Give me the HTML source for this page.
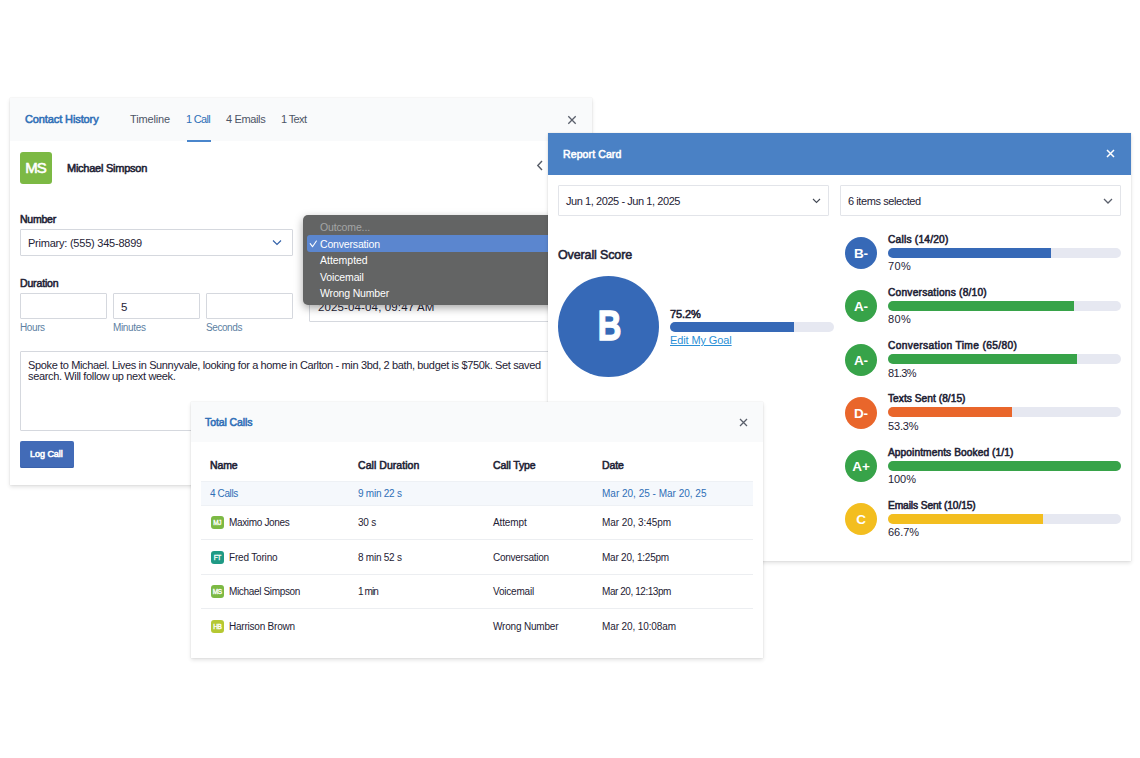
<!DOCTYPE html>
<html><head><meta charset="utf-8">
<style>
*{box-sizing:border-box;margin:0;padding:0}
html,body{width:1140px;height:758px;background:#fff;overflow:hidden}
body{position:relative;font-family:"Liberation Sans",sans-serif;color:#1e2235;font-size:11px}
.abs{position:absolute}
.t{position:absolute;white-space:nowrap;line-height:14px;height:14px}
.b{font-weight:normal;-webkit-text-stroke:.55px}
.card{position:absolute;background:#fff;box-shadow:0 2px 4px rgba(0,0,0,.12),0 0 1px rgba(0,0,0,.14)}
.hd{position:absolute;left:0;top:0;right:0;background:#f9fafb}
.inp{position:absolute;border:1px solid #d5d8de;background:#fff;border-radius:1px}
.blue{color:#2f6fb7}
.bar{position:absolute;height:10px;border-radius:5px;background:#e6e8f1;overflow:hidden}
.bar i{position:absolute;left:0;top:0;bottom:0;display:block}
.circ{position:absolute;border-radius:50%;color:#fff;font-weight:bold;text-align:center}
.row{position:absolute;left:10px;right:10px;border-bottom:1px solid #e9ebee}
.av{position:absolute;width:13px;height:13px;border-radius:3px;color:#fff;font-size:6.5px;-webkit-text-stroke:.3px;line-height:13.5px;letter-spacing:-.4px;text-indent:-.4px;text-align:center}
</style></head><body>

<!-- Card 1: Contact History -->
<div class="card" id="c1" style="left:10px;top:98px;width:582px;height:387px">
  <div class="hd" style="height:43px"></div>
  <div class="t b blue" style="left:15px;top:14px;font-size:11px;letter-spacing:-0.11px">Contact History</div>
  <div class="t" style="left:120px;top:14px;color:#4d5566;letter-spacing:-0.15px">Timeline</div>
  <div class="t blue" style="left:176px;top:14px;letter-spacing:-0.69px">1 Call</div>
  <div class="t" style="left:216px;top:14px;color:#4d5566;letter-spacing:-0.36px">4 Emails</div>
  <div class="t" style="left:271px;top:14px;color:#4d5566;letter-spacing:-0.64px">1 Text</div>
  <div class="abs" style="left:177px;top:42px;width:24px;height:2px;background:#4a86cc"></div>
  <svg class="abs" style="left:557px;top:16.5px" width="10" height="10" viewBox="0 0 10 10"><path d="M1.3 1.3L8.7 8.7M8.7 1.3L1.3 8.7" stroke="#5a5f6b" stroke-width="1.3" fill="none"/></svg>
  <div class="abs" style="left:10px;top:54px;width:32px;height:32px;border-radius:3px;background:#7cb944;color:#fff;-webkit-text-stroke:.6px;font-size:15px;line-height:32px;text-align:center;letter-spacing:-1.1px;text-indent:-1px">MS</div>
  <div class="t b" style="left:57px;top:63px;letter-spacing:-0.25px">Michael Simpson</div>
  <svg class="abs" style="left:526px;top:62px" width="8" height="11" viewBox="0 0 8 11"><path d="M6 1L1.8 5.5L6 10" stroke="#555b66" stroke-width="1.4" fill="none"/></svg>
  <div class="t b" style="left:10px;top:114px;font-size:10.5px;letter-spacing:-0.23px">Number</div>
  <div class="inp" style="left:10px;top:131px;width:273px;height:27px"></div>
  <div class="t" style="left:18px;top:138px;letter-spacing:-0.23px">Primary: (555) 345-8899</div>
  <svg class="abs" style="left:262px;top:141px" width="10" height="7" viewBox="0 0 10 7"><path d="M1 1.5L5 5.5L9 1.5" stroke="#2f5fa8" stroke-width="1.1" fill="none"/></svg>
  <div class="t b" style="left:10px;top:178px;font-size:10.5px;letter-spacing:-0.15px">Duration</div>
  <div class="inp" style="left:10px;top:195px;width:87px;height:26px"></div>
  <div class="inp" style="left:103px;top:195px;width:87px;height:26px"></div>
  <div class="inp" style="left:196px;top:195px;width:87px;height:26px"></div>
  <div class="t" style="left:111px;top:202px;font-size:11.5px">5</div>
  <div class="t" style="left:10px;top:222.5px;font-size:10px;color:#5d7fa3;letter-spacing:-0.4px">Hours</div>
  <div class="t" style="left:103px;top:222.5px;font-size:10px;color:#5d7fa3;letter-spacing:-0.35px">Minutes</div>
  <div class="t" style="left:196px;top:222.5px;font-size:10px;color:#5d7fa3;letter-spacing:-0.42px">Seconds</div>
  <div class="inp" style="left:299px;top:195px;width:273px;height:29px"></div>
  <div class="t" style="left:308px;top:202px;font-size:11.5px;letter-spacing:0.13px">2025-04-04, 09:47 AM</div>
  <div class="inp" style="left:10px;top:253px;width:562px;height:80px"></div>
  <div class="t" style="left:18px;top:259.6px;font-size:11px;letter-spacing:-0.36px">Spoke to Michael. Lives in Sunnyvale, looking for a home in Carlton - min 3bd, 2 bath, budget is $750k. Set saved</div>
  <div class="t" style="left:18px;top:270.9px;font-size:11px;letter-spacing:-0.35px">search. Will follow up next week.</div>
  <div class="abs" style="left:10px;top:343px;width:54px;height:27px;border-radius:2px;background:#426bb7;box-shadow:inset 0 -1px 0 #3b62ab"></div>
  <div class="t b" style="left:20px;top:349px;color:#fff;font-size:9px;letter-spacing:-0.03px">Log Call</div>
  <!-- dropdown -->
  <div class="abs" style="left:293px;top:117px;width:300px;height:90px;background:#636464;border-radius:5px 0 0 5px;box-shadow:0 3px 8px rgba(0,0,0,.35)">
    <div class="abs" style="left:4px;top:20px;right:0;height:17px;background:#5b86cf;border-radius:3px 0 0 3px"></div>
    <div class="t d" style="left:17px;top:5px;color:#a4a5a6;font-size:10.5px;letter-spacing:-0.14px">Outcome...</div>
    <svg class="abs" style="left:6px;top:24px" width="9" height="9" viewBox="0 0 9 9"><path d="M1.2 4.6L3.5 7.7L7.4 2" stroke="#fff" stroke-width="1.1" fill="none" stroke-linecap="round" stroke-linejoin="round"/></svg>
    <div class="t d" style="left:17px;top:21.5px;color:#fff;font-size:10.5px;letter-spacing:-0.17px">Conversation</div>
    <div class="t d" style="left:17px;top:38px;color:#fff;font-size:10.5px;letter-spacing:-0.02px">Attempted</div>
    <div class="t d" style="left:17px;top:54.5px;color:#fff;font-size:10.5px;letter-spacing:-0.13px">Voicemail</div>
    <div class="t d" style="left:17px;top:71px;color:#fff;font-size:10.5px;letter-spacing:-0.17px">Wrong Number</div>
  </div>
</div>

<!-- Card 2: Report Card -->
<div class="card" id="c2" style="left:548px;top:133px;width:583px;height:428px">
  <div class="abs" style="left:0;top:0;right:0;height:42px;background:#4a81c5"></div>
  <div class="t b" style="left:15px;top:13.5px;color:#fff;font-size:10.5px;letter-spacing:0.11px">Report Card</div>
  <svg class="abs" style="left:558px;top:16px" width="9" height="9" viewBox="0 0 9 9"><path d="M1 1L8 8M8 1L1 8" stroke="#fff" stroke-width="1.5" fill="none"/></svg>
  <div class="inp" style="left:10px;top:52px;width:271px;height:31px;border-color:#e2e4e9"></div>
  <div class="t" style="left:18px;top:61px;letter-spacing:-0.43px">Jun 1, 2025 - Jun 1, 2025</div>
  <svg class="abs" style="left:264px;top:65px" width="9" height="6" viewBox="0 0 9 6"><path d="M1 1L4.5 4.5L8 1" stroke="#444a55" stroke-width="1.1" fill="none"/></svg>
  <div class="inp" style="left:292px;top:52px;width:281px;height:31px;border-color:#e2e4e9"></div>
  <div class="t" style="left:300px;top:61px;letter-spacing:-0.42px">6 items selected</div>
  <svg class="abs" style="left:555px;top:65px" width="10" height="6" viewBox="0 0 10 6"><path d="M1 1L5 5L9 1" stroke="#5a5f6b" stroke-width="1.25" fill="none"/></svg>
  <div class="t b" style="left:10px;top:114.5px;font-size:12.5px;letter-spacing:-0.13px">Overall Score</div>
  <div class="circ" style="left:10px;top:143px;width:101px;height:101px;background:#3669b7;font-size:42px;line-height:100px"><span style="display:inline-block;transform:translateX(1.4px) scaleX(.78);-webkit-text-stroke:1.4px">B</span></div>
  <div class="t b" style="left:122px;top:173.5px;font-size:11px;letter-spacing:-0.1px">75.2%</div>
  <div class="bar" style="left:122px;top:189px;width:164px"><i style="width:124px;background:#3669b7"></i></div>
  <div class="t" style="left:122px;top:200px;color:#2a8fd6;text-decoration:underline;letter-spacing:-0.11px">Edit My Goal</div>
  <div class="circ" style="left:297px;top:104.2px;width:32px;height:32px;background:#3669b7;font-size:13.5px;line-height:33px">B-</div>
  <div class="t b" style="left:340px;top:99.9px;font-size:10.2px;letter-spacing:0.22px">Calls (14/20)</div>
  <div class="bar" style="left:340px;top:115.0px;width:233px"><i style="width:163.1px;background:#3669b7"></i></div>
  <div class="t" style="left:340px;top:126.1px;font-size:11px;letter-spacing:0.32px">70%</div>
  <div class="circ" style="left:297px;top:157.3px;width:32px;height:32px;background:#37a349;font-size:13.5px;line-height:33px">A-</div>
  <div class="t b" style="left:340px;top:153.1px;font-size:10.2px;letter-spacing:0.22px">Conversations (8/10)</div>
  <div class="bar" style="left:340px;top:168.2px;width:233px"><i style="width:186.4px;background:#37a349"></i></div>
  <div class="t" style="left:340px;top:179.3px;font-size:11px;letter-spacing:0.32px">80%</div>
  <div class="circ" style="left:297px;top:210.5px;width:32px;height:32px;background:#37a349;font-size:13.5px;line-height:33px">A-</div>
  <div class="t b" style="left:340px;top:206.2px;font-size:10.2px;letter-spacing:0.37px">Conversation Time (65/80)</div>
  <div class="bar" style="left:340px;top:221.3px;width:233px"><i style="width:189.4px;background:#37a349"></i></div>
  <div class="t" style="left:340px;top:232.5px;font-size:11px;letter-spacing:-0.66px">81.3%</div>
  <div class="circ" style="left:297px;top:263.6px;width:32px;height:32px;background:#e9662b;font-size:13.5px;line-height:33px">D-</div>
  <div class="t b" style="left:340px;top:259.4px;font-size:10.2px;letter-spacing:0.03px">Texts Sent (8/15)</div>
  <div class="bar" style="left:340px;top:274.4px;width:233px"><i style="width:124.2px;background:#e9662b"></i></div>
  <div class="t" style="left:340px;top:285.7px;font-size:11px;letter-spacing:-0.18px">53.3%</div>
  <div class="circ" style="left:297px;top:316.8px;width:32px;height:32px;background:#37a349;font-size:13.5px;line-height:33px">A+</div>
  <div class="t b" style="left:340px;top:312.5px;font-size:10.2px;letter-spacing:0.08px">Appointments Booked (1/1)</div>
  <div class="bar" style="left:340px;top:327.6px;width:233px"><i style="width:233.0px;background:#37a349"></i></div>
  <div class="t" style="left:340px;top:338.9px;font-size:11px;letter-spacing:-0.06px">100%</div>
  <div class="circ" style="left:297px;top:369.9px;width:32px;height:32px;background:#f3be1f;font-size:13.5px;line-height:33px">C</div>
  <div class="t b" style="left:340px;top:365.6px;font-size:10.2px;letter-spacing:-0.1px">Emails Sent (10/15)</div>
  <div class="bar" style="left:340px;top:380.8px;width:233px"><i style="width:155.4px;background:#f3be1f"></i></div>
  <div class="t" style="left:340px;top:392.1px;font-size:11px;letter-spacing:-0.04px">66.7%</div>
</div>

<!-- Card 3: Total Calls -->
<div class="card" id="c3" style="left:191px;top:402px;width:572px;height:256px">
  <div class="hd" style="height:40px"></div>
  <div class="t b blue" style="left:14px;top:13px;font-size:10.5px;letter-spacing:-0.09px">Total Calls</div>
  <svg class="abs" style="left:548px;top:16px" width="9" height="9" viewBox="0 0 9 9"><path d="M1 1L8 8M8 1L1 8" stroke="#5a5f6b" stroke-width="1.3" fill="none"/></svg>
  <div class="t b" style="left:19px;top:56px;font-size:10.5px;letter-spacing:-0.13px">Name</div>
  <div class="t b" style="left:167px;top:56px;font-size:10.5px;letter-spacing:0.05px">Call Duration</div>
  <div class="t b" style="left:302px;top:56px;font-size:10.5px;letter-spacing:-0.12px">Call Type</div>
  <div class="t b" style="left:411px;top:56px;font-size:10.5px;letter-spacing:-0.1px">Date</div>
  <div class="abs" style="left:10px;top:79px;width:552px;height:25px;background:#f5f8fc;border-top:1px solid #eef1f5;border-bottom:1px solid #eef1f5"></div>
  <div class="t blue" style="left:19px;top:84.8px;font-size:10px;letter-spacing:-0.38px">4 Calls</div>
  <div class="t blue" style="left:167px;top:84.8px;font-size:10px;letter-spacing:-0.24px">9 min 22 s</div>
  <div class="t blue" style="left:411px;top:84.8px;font-size:10px">Mar 20, 25 - Mar 20, 25</div>
  <div class="av" style="left:20px;top:114.3px;background:#7cb944">MJ</div>
  <div class="t" style="left:38px;top:114.3px;font-size:10px;letter-spacing:-0.34px">Maximo Jones</div>
  <div class="t" style="left:167px;top:114.3px;font-size:10px;letter-spacing:-0.25px">30 s</div>
  <div class="t" style="left:302px;top:114.3px;font-size:10px;letter-spacing:-0.12px">Attempt</div>
  <div class="t" style="left:411px;top:114.3px;font-size:10px;letter-spacing:-0.07px">Mar 20, 3:45pm</div>
  <div class="abs" style="left:10px;top:137.4px;width:552px;height:1px;background:#eceef1"></div>
  <div class="av" style="left:20px;top:148.8px;background:#1f9a85">FT</div>
  <div class="t" style="left:38px;top:148.8px;font-size:10px;letter-spacing:-0.18px">Fred Torino</div>
  <div class="t" style="left:167px;top:148.8px;font-size:10px;letter-spacing:-0.24px">8 min 52 s</div>
  <div class="t" style="left:302px;top:148.8px;font-size:10px;letter-spacing:-0.26px">Conversation</div>
  <div class="t" style="left:411px;top:148.8px;font-size:10px;letter-spacing:-0.22px">Mar 20, 1:25pm</div>
  <div class="abs" style="left:10px;top:171.9px;width:552px;height:1px;background:#eceef1"></div>
  <div class="av" style="left:20px;top:183.3px;background:#7cb944">MS</div>
  <div class="t" style="left:38px;top:183.3px;font-size:10px;letter-spacing:-0.34px">Michael Simpson</div>
  <div class="t" style="left:167px;top:183.3px;font-size:10px;letter-spacing:-0.89px">1 min</div>
  <div class="t" style="left:302px;top:183.3px;font-size:10px;letter-spacing:-0.2px">Voicemail</div>
  <div class="t" style="left:411px;top:183.3px;font-size:10px;letter-spacing:-0.44px">Mar 20, 12:13pm</div>
  <div class="abs" style="left:10px;top:206.4px;width:552px;height:1px;background:#eceef1"></div>
  <div class="av" style="left:20px;top:217.8px;background:#b5c832">HB</div>
  <div class="t" style="left:38px;top:217.8px;font-size:10px;letter-spacing:-0.22px">Harrison Brown</div>
  <div class="t" style="left:302px;top:217.8px;font-size:10px;letter-spacing:-0.19px">Wrong Number</div>
  <div class="t" style="left:411px;top:217.8px;font-size:10px;letter-spacing:-0.11px">Mar 20, 10:08am</div>
</div>
</body></html>
